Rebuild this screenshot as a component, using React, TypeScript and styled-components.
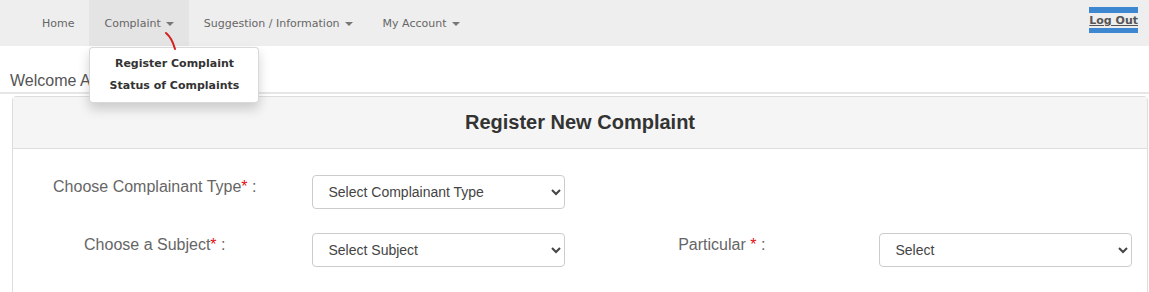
import React from "react";
import styled, { createGlobalStyle } from "styled-components";

const GlobalStyle = createGlobalStyle`
  body {
    margin: 0;
    overflow: hidden;
    background: #fff;
    font-family: "Liberation Sans", Arial, sans-serif;
  }
`;

const NavBar = styled.div`
  height: 46px;
  background: #eeeeee;
  display: flex;
  align-items: stretch;
  padding-left: 27px;
  position: relative;
  z-index: 5;
`;

const NavItem = styled.div<{ $active?: boolean }>`
  position: relative;
  display: flex;
  align-items: center;
  padding: 0 15px;
  font-family: "DejaVu Sans", Verdana, sans-serif;
  font-size: 11px;
  color: #666;
  background: ${({ $active }) => ($active ? "#e4e4e4" : "transparent")};
`;

const Caret = styled.span`
  display: inline-block;
  margin-left: 5px;
  margin-top: 1px;
  border-top: 4px solid #777;
  border-left: 4px solid transparent;
  border-right: 4px solid transparent;
`;

const Menu = styled.div`
  position: absolute;
  top: 47px;
  left: 0;
  width: 170px;
  box-sizing: border-box;
  padding: 5px 0;
  background: #fff;
  border: 1px solid rgba(0, 0, 0, 0.15);
  border-radius: 4px;
  box-shadow: 0 6px 12px rgba(0, 0, 0, 0.175);
`;

const MenuItem = styled.div`
  height: 22px;
  line-height: 22px;
  text-align: center;
  font-weight: bold;
  font-size: 11px;
  color: #333;
`;

const Mark = styled.svg`
  position: absolute;
  left: 0;
  top: 0;
  pointer-events: none;
`;

const LogOut = styled.a`
  align-self: flex-start;
  margin: 7px 11px 0 auto;
  border-top: 6px solid #3c87cf;
  border-bottom: 5px solid #3c87cf;
  font-family: "DejaVu Sans", Verdana, sans-serif;
  font-weight: bold;
  font-size: 11px;
  line-height: 15px;
  color: #555;
  text-decoration: underline;
`;

const Welcome = styled.div`
  padding: 25px 10px 0;
  height: 21px;
  font-size: 16px;
  line-height: 20px;
  color: #555;
`;

const Main = styled.div`
  border-top: 2px solid #e6e6e6;
  padding: 2px 0 0 12px;
`;

const Panel = styled.div`
  width: 1134px;
  border: 1px solid #dddddd;
  border-radius: 4px;
`;

const PanelHead = styled.div`
  height: 51px;
  background: #f5f5f5;
  border-bottom: 1px solid #dddddd;
  display: flex;
  align-items: center;
  justify-content: center;
  font-size: 20px;
  font-weight: bold;
  color: #333;
`;

const PanelBody = styled.div`
  padding: 26px 0 40px;
  display: flex;
  flex-direction: column;
  gap: 24px;
`;

const Row = styled.div`
  display: grid;
  grid-template-columns: repeat(4, 1fr);
`;

const Cell = styled.div`
  padding: 0 15px;
`;

const Label = styled.div`
  padding-top: 2px;
  text-align: center;
  font-size: 16px;
  line-height: 20px;
  color: #666;
`;

const Req = styled.span`
  color: #e01010;
`;

const Select = styled.select`
  width: 100%;
  height: 34px;
  padding: 0 12px;
  border: 1px solid #cccccc;
  border-radius: 4px;
  background: #fff;
  font-family: "Liberation Sans", Arial, sans-serif;
  font-size: 14px;
  color: #444;
`;

const FieldLabel = ({ text, gap }: { text: string; gap?: boolean }) => (
  <Label>
    {text}
    {gap ? " " : ""}
    <Req>*</Req> :
  </Label>
);

export default function App() {
  return (
    <>
      <GlobalStyle />
      <NavBar>
        <NavItem>Home</NavItem>
        <NavItem $active>
          Complaint
          <Caret />
          <Menu>
            <MenuItem>Register Complaint</MenuItem>
            <MenuItem>Status of Complaints</MenuItem>
          </Menu>
        </NavItem>
        <NavItem>
          Suggestion / Information
          <Caret />
        </NavItem>
        <NavItem>
          My Account
          <Caret />
        </NavItem>
        <LogOut>Log Out</LogOut>
        <Mark width="200" height="60">
          <path d="M166 33 Q172 38 175 49" stroke="#d42020" strokeWidth="2" fill="none" strokeLinecap="round" />
        </Mark>
      </NavBar>
      <Welcome>Welcome Admin</Welcome>
      <Main>
        <Panel>
          <PanelHead>Register New Complaint</PanelHead>
          <PanelBody>
            <Row>
              <Cell>
                <FieldLabel text="Choose Complainant Type" />
              </Cell>
              <Cell>
                <Select defaultValue="">
                  <option value="">Select Complainant Type</option>
                </Select>
              </Cell>
            </Row>
            <Row>
              <Cell>
                <FieldLabel text="Choose a Subject" />
              </Cell>
              <Cell>
                <Select defaultValue="">
                  <option value="">Select Subject</option>
                </Select>
              </Cell>
              <Cell>
                <FieldLabel text="Particular" gap />
              </Cell>
              <Cell>
                <Select defaultValue="">
                  <option value="">Select</option>
                </Select>
              </Cell>
            </Row>
          </PanelBody>
        </Panel>
      </Main>
    </>
  );
}
